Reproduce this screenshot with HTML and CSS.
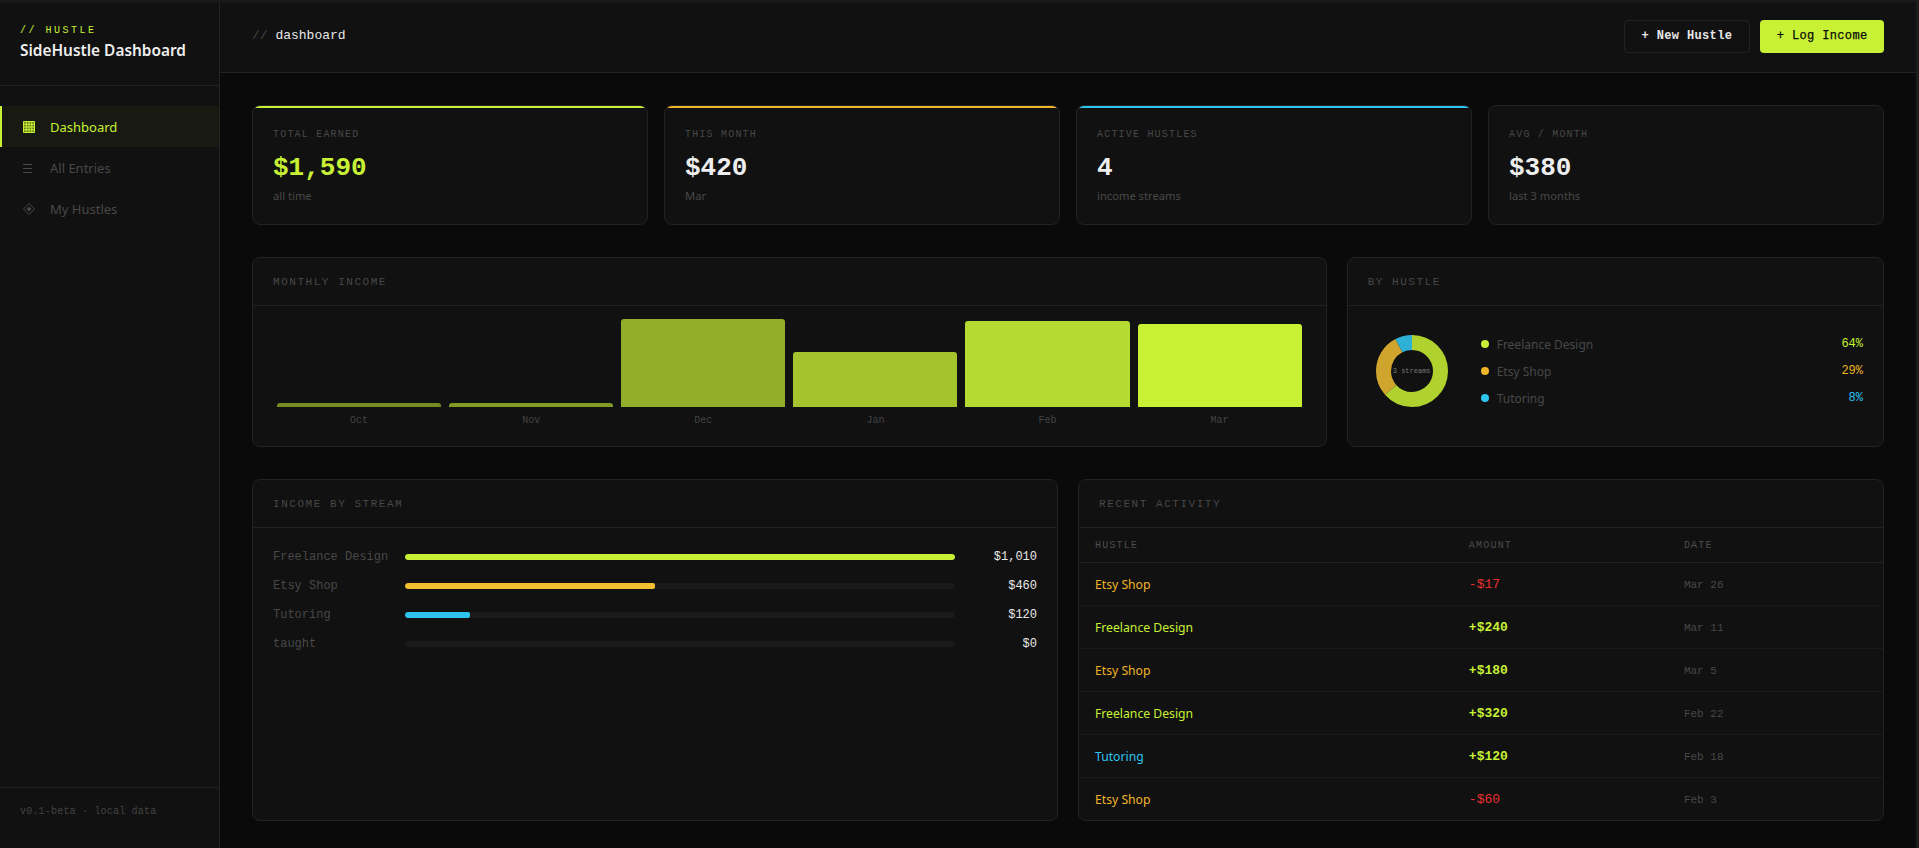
FILE: index.html
```html
<!DOCTYPE html>
<html lang="en">
<head>
<meta charset="utf-8">
<title>SideHustle Dashboard</title>
<link rel="stylesheet" href="styles.css">
</head>
<body>
<aside class="sidebar">
  <div class="brand">
    <div class="brand-tag">// HUSTLE</div>
    <div class="brand-name">SideHustle Dashboard</div>
  </div>
  <nav class="nav">
    <a class="nav-item active">
      <svg class="nav-icon" viewBox="0 0 14 14" width="14" height="14" aria-hidden="true">
        <path class="icon-fill" d="M1.5 1.5h11v11h-11z"></path>
        <path class="icon-line" d="M1.5 1.5h11v11h-11zM1.5 4.25h11M1.5 7h11M1.5 9.75h11M4.25 1.5v11M7 1.5v11M9.75 1.5v11"></path>
      </svg>Dashboard
    </a>
    <a class="nav-item">
      <svg class="nav-icon" viewBox="0 0 14 14" width="14" height="14" aria-hidden="true">
        <path class="icon-line" d="M1 3.5h9M1 7.5h9M1 11.5h9"></path>
      </svg>All Entries
    </a>
    <a class="nav-item">
      <svg class="nav-icon" viewBox="0 0 14 14" width="14" height="14" aria-hidden="true">
        <path class="icon-line" d="M7 1.5 12.5 7 7 12.5 1.5 7z"></path>
        <path class="icon-solid" d="M7 4.5 9.5 7 7 9.5 4.5 7z"></path>
      </svg>My Hustles
    </a>
  </nav>
  <div class="side-foot">v0.1-beta · local data</div>
</aside>
<main class="main">
  <header class="topbar">
    <div class="crumb"><span class="crumb-dim">//</span> dashboard</div>
    <div class="actions">
      <button class="btn btn-ghost">+ New Hustle</button>
      <button class="btn btn-lime">+ Log Income</button>
    </div>
  </header>
  <div class="content">
    <section class="stats">
      <div class="stat stat-lime">
        <div class="stat-label">TOTAL EARNED</div>
        <div class="stat-value lime">$1,590</div>
        <div class="stat-sub">all time</div>
      </div>
      <div class="stat stat-amber">
        <div class="stat-label">THIS MONTH</div>
        <div class="stat-value">$420</div>
        <div class="stat-sub">Mar</div>
      </div>
      <div class="stat stat-blue">
        <div class="stat-label">ACTIVE HUSTLES</div>
        <div class="stat-value">4</div>
        <div class="stat-sub">income streams</div>
      </div>
      <div class="stat">
        <div class="stat-label">AVG / MONTH</div>
        <div class="stat-value">$380</div>
        <div class="stat-sub">last 3 months</div>
      </div>
    </section>

    <section class="row-charts">
      <div class="panel">
        <div class="panel-head">MONTHLY INCOME</div>
        <div class="bars">
          <div class="bar-col"><div class="bar-slot"><div class="bar" style="height:4px;opacity:.55"></div></div><div class="bar-label">Oct</div></div>
          <div class="bar-col"><div class="bar-slot"><div class="bar" style="height:4px;opacity:.62"></div></div><div class="bar-label">Nov</div></div>
          <div class="bar-col"><div class="bar-slot"><div class="bar" style="height:88px;opacity:.7"></div></div><div class="bar-label">Dec</div></div>
          <div class="bar-col"><div class="bar-slot"><div class="bar" style="height:55px;opacity:.8"></div></div><div class="bar-label">Jan</div></div>
          <div class="bar-col"><div class="bar-slot"><div class="bar" style="height:86px;opacity:.9"></div></div><div class="bar-label">Feb</div></div>
          <div class="bar-col"><div class="bar-slot"><div class="bar" style="height:83px"></div></div><div class="bar-label">Mar</div></div>
        </div>
      </div>
      <div class="panel">
        <div class="panel-head">BY HUSTLE</div>
        <div class="donut-body">
          <div class="donut">
            <svg class="donut-svg" viewBox="0 0 72 72" width="72" height="72">
              <circle class="seg seg-lime" cx="36" cy="36" r="28.5" pathLength="100" stroke-dasharray="63.5 36.5" stroke-dashoffset="0"></circle>
              <circle class="seg seg-amber" cx="36" cy="36" r="28.5" pathLength="100" stroke-dasharray="28.9 71.1" stroke-dashoffset="-63.5"></circle>
              <circle class="seg seg-blue" cx="36" cy="36" r="28.5" pathLength="100" stroke-dasharray="7.6 92.4" stroke-dashoffset="-92.4"></circle>
            </svg>
            <div class="donut-text">3 streams</div>
          </div>
          <ul class="legend">
            <li class="legend-row"><span class="dot dot-lime"></span><span class="legend-name">Freelance Design</span><span class="legend-pct lime">64%</span></li>
            <li class="legend-row"><span class="dot dot-amber"></span><span class="legend-name">Etsy Shop</span><span class="legend-pct amber">29%</span></li>
            <li class="legend-row"><span class="dot dot-blue"></span><span class="legend-name">Tutoring</span><span class="legend-pct blue">8%</span></li>
          </ul>
        </div>
      </div>
    </section>

    <section class="row-lists">
      <div class="panel">
        <div class="panel-head">INCOME BY STREAM</div>
        <div class="streams">
          <div class="stream"><span class="stream-name">Freelance Design</span><span class="track"><span class="fill fill-lime" style="width:100%"></span></span><span class="stream-amt">$1,010</span></div>
          <div class="stream"><span class="stream-name">Etsy Shop</span><span class="track"><span class="fill fill-amber" style="width:45.5%"></span></span><span class="stream-amt">$460</span></div>
          <div class="stream"><span class="stream-name">Tutoring</span><span class="track"><span class="fill fill-blue" style="width:11.9%"></span></span><span class="stream-amt">$120</span></div>
          <div class="stream"><span class="stream-name">taught</span><span class="track"></span><span class="stream-amt">$0</span></div>
        </div>
      </div>
      <div class="panel">
        <div class="panel-head">RECENT ACTIVITY</div>
        <table class="activity">
          <thead>
            <tr><th class="col-hustle">HUSTLE</th><th class="col-num">AMOUNT</th><th class="col-num">DATE</th></tr>
          </thead>
          <tbody>
            <tr><td class="name amber">Etsy Shop</td><td class="amt red">-$17</td><td class="date">Mar 26</td></tr>
            <tr><td class="name lime">Freelance Design</td><td class="amt lime">+$240</td><td class="date">Mar 11</td></tr>
            <tr><td class="name amber">Etsy Shop</td><td class="amt lime">+$180</td><td class="date">Mar 5</td></tr>
            <tr><td class="name lime">Freelance Design</td><td class="amt lime">+$320</td><td class="date">Feb 22</td></tr>
            <tr><td class="name blue">Tutoring</td><td class="amt lime">+$120</td><td class="date">Feb 18</td></tr>
            <tr><td class="name amber">Etsy Shop</td><td class="amt red">-$60</td><td class="date">Feb 3</td></tr>
          </tbody>
        </table>
      </div>
    </section>
  </div>
</main>
</body>
</html>
```

FILE: styles.css
```css
* { box-sizing: border-box; }
html, body { height: 100%; }
body {
  margin: 0;
  display: flex;
  height: 100vh;
  overflow: hidden;
  background: #0a0a0a;
  color: #e8e8e8;
  font-family: "Noto Sans", sans-serif;
}
body::before {
  content: "";
  position: fixed;
  top: 0;
  left: 0;
  right: 0;
  height: 4px;
  background: linear-gradient(#1c1c1c, rgba(28, 28, 28, 0));
  pointer-events: none;
  z-index: 5;
}
/* the scrollbar gutter seen at the right edge of the window */
body::after {
  content: "";
  flex: none;
  width: 3px;
  background: #1c1c1c;
}
.lime { color: #c8f135; }
.amber { color: #f0b429; }
.blue { color: #2ec4f0; }
.red { color: #e83030; }

/* sidebar */
.sidebar {
  width: 220px;
  flex: none;
  display: flex;
  flex-direction: column;
  background: #111;
  border-right: 1px solid #222;
}
.brand {
  height: 86px;
  padding: 24px 20px 0;
  border-bottom: 1px solid #222;
}
.brand-tag {
  font: 10px/14px "Liberation Mono", monospace;
  letter-spacing: 2.5px;
  color: #c8f135;
}
.brand-name {
  margin-top: 2px;
  font-size: 15.4px;
  line-height: 22px;
  font-weight: 600;
  color: #eee;
}
.nav { flex: 1; padding-top: 20px; }
.nav-item {
  display: flex;
  align-items: center;
  height: 41px;
  padding-left: 20px;
  border-left: 2px solid transparent;
  font-size: 13px;
  color: #484848;
}
.nav-item.active {
  color: #c8f135;
  background: #181a12;
  border-left-color: #c8f135;
}
.nav-icon {
  flex: none;
  margin-right: 14px;
}
.icon-line {
  fill: none;
  stroke: currentColor;
  stroke-width: 1;
}
.icon-fill {
  fill: currentColor;
  opacity: 0.45;
}
.icon-solid { fill: currentColor; }
.side-foot {
  height: 61px;
  padding-top: 17px;
  padding-left: 20px;
  border-top: 1px solid #222;
  font: 10px/14px "Liberation Mono", monospace;
  letter-spacing: 0.2px;
  color: #444;
}

/* main */
.main {
  flex: 1;
  min-width: 0;
  height: 100vh;
  overflow-y: auto;
  scrollbar-width: none;
}

.topbar {
  position: sticky;
  top: 0;
  z-index: 2;
  height: 73px;
  padding: 0 32px;
  display: flex;
  align-items: center;
  justify-content: space-between;
  background: #111;
  border-bottom: 1px solid #222;
}
.crumb {
  font: 13px/18px "Liberation Mono", monospace;
  color: #e8e8e8;
}
.crumb-dim { color: #444; }
.actions { display: flex; gap: 10px; }
.btn {
  height: 33px;
  font: 700 12px/1 "Liberation Mono", monospace;
  letter-spacing: 0.36px;
  border-radius: 4px;
}
.btn-ghost {
  padding: 0 17px;
  background: #111;
  color: #e8e8e8;
  border: 1px solid #222;
}
.btn-lime {
  padding: 0 16.5px;
  background: #c8f135;
  color: #0a0a0a;
  border: 0;
  font-weight: 400;
  -webkit-text-stroke: 0.25px #0a0a0a;
}

.content {
  padding: 32px;
  display: flex;
  flex-direction: column;
  gap: 32px;
}

/* stats */
.stats {
  display: grid;
  grid-template-columns: repeat(4, 1fr);
  gap: 16px;
}
.stat {
  position: relative;
  height: 120px;
  padding: 22px 20px 0;
  background: #111;
  border: 1px solid #222;
  border-radius: 8px;
  overflow: hidden;
}
.stat-lime::before,
.stat-amber::before,
.stat-blue::before {
  content: "";
  position: absolute;
  top: 0;
  left: 0;
  right: 0;
  height: 2px;
}
.stat-lime::before { background: #c8f135; }
.stat-amber::before { background: #f0b429; }
.stat-blue::before { background: #2ec4f0; }
.stat-label {
  font: 10px/14px "Liberation Mono", monospace;
  letter-spacing: 1.2px;
  color: #484848;
}
.stat-value {
  margin-top: 10px;
  font: 700 26px/32px "Liberation Mono", monospace;
}
.stat-value:not(.lime) { color: #eee; }
.stat-sub {
  margin-top: 4px;
  font-size: 11.2px;
  line-height: 16px;
  color: #484848;
}

/* panels */
.panel {
  background: #111;
  border: 1px solid #222;
  border-radius: 8px;
  overflow: hidden;
}
.panel-head {
  height: 48px;
  padding: 2px 20px 0;
  display: flex;
  align-items: center;
  border-bottom: 1px solid #222;
  font: 11px/1 "Liberation Mono", monospace;
  letter-spacing: 1.54px;
  color: #484848;
}
.row-charts {
  display: grid;
  grid-template-columns: 2fr 1fr;
  gap: 20px;
}
.row-lists {
  display: grid;
  grid-template-columns: 1fr 1fr;
  gap: 20px;
}

/* bar chart */
.bars {
  display: flex;
  gap: 8px;
  height: 140px;
  padding: 13px 24px 0;
}
.bar-col { flex: 1; min-width: 0; }
.bar-slot {
  height: 88px;
  display: flex;
  align-items: flex-end;
}
.bar {
  width: 100%;
  background: #c8f135;
  border-radius: 3px 3px 0 0;
}
.bar-label {
  margin-top: 7px;
  text-align: center;
  font: 10px/14px "Liberation Mono", monospace;
  color: #444;
}

/* donut */
.donut-body {
  height: 140px;
  padding: 0 20px 10px 28px;
  display: flex;
  align-items: center;
  gap: 33px;
}
.donut {
  position: relative;
  flex: none;
  width: 72px;
  height: 72px;
}
.donut-svg { display: block; transform: rotate(-90deg); }
.seg {
  fill: none;
  stroke-width: 15;
}
.seg-lime { stroke: #b0d22e; }
.seg-amber { stroke: #d0a52e; }
.seg-blue { stroke: #2fb0d6; }
.donut-text {
  position: absolute;
  top: 0;
  left: 0;
  right: 0;
  bottom: 0;
  display: flex;
  align-items: center;
  justify-content: center;
  font: 7px/1 "Liberation Mono", monospace;
  color: #777;
}
.legend {
  flex: 1;
  margin: 0;
  padding: 0;
  list-style: none;
  display: flex;
  flex-direction: column;
  gap: 10px;
}
.legend-row {
  display: flex;
  align-items: center;
  height: 17px;
  gap: 8px;
}
.dot {
  width: 8px;
  height: 8px;
  border-radius: 50%;
}
.dot-lime { background: #c8f135; }
.dot-amber { background: #f0b429; }
.dot-blue { background: #2ec4f0; }
.legend-name {
  flex: 1;
  font-size: 12px;
  color: #484848;
}
.legend-pct {
  font: 12px/1 "Liberation Mono", monospace;
}

/* streams */
.streams {
  padding: 20px 20px 0;
  display: flex;
  flex-direction: column;
  gap: 12px;
}
.stream {
  display: flex;
  align-items: center;
  height: 17px;
  gap: 12px;
  font: 12px/17px "Liberation Mono", monospace;
}
.stream-name {
  width: 120px;
  flex: none;
  padding-top: 1px;
  white-space: nowrap;
  color: #484848;
}
.track {
  flex: 1;
  height: 6px;
  background: #1a1a1a;
  border-radius: 3px;
  overflow: hidden;
  display: block;
}
.fill {
  display: block;
  height: 100%;
  border-radius: 2px;
}
.fill-lime { background: #c8f135; }
.fill-amber { background: #f0c030; }
.fill-blue { background: #2ec4f0; }
.stream-amt {
  width: 70px;
  flex: none;
  padding-top: 1px;
  text-align: right;
  color: #e8e8e8;
}

/* activity table */
.activity {
  width: 100%;
  border-collapse: collapse;
  table-layout: fixed;
}
.activity th {
  height: 34px;
  padding: 3px 16px 0;
  text-align: left;
  border-bottom: 1px solid #222;
  font: 10px/14px "Liberation Mono", monospace;
  letter-spacing: 1.2px;
  color: #4c4c4c;
}
.col-hustle { width: 46.5%; }
.col-num { width: 26.75%; }
.activity td {
  height: 43px;
  padding: 2px 16px 0;
  border-bottom: 1px solid #1a1a1a;
}
.activity tr:last-child td { border-bottom: 0; }
.name { font-size: 12.2px; }
.amt { font: 700 13px/1 "Liberation Mono", monospace; }
.amt.red { font-weight: 400; }
.activity .date {
  padding-top: 4px;
  font: 11px/1 "Liberation Mono", monospace;
  color: #484848;
}
```
